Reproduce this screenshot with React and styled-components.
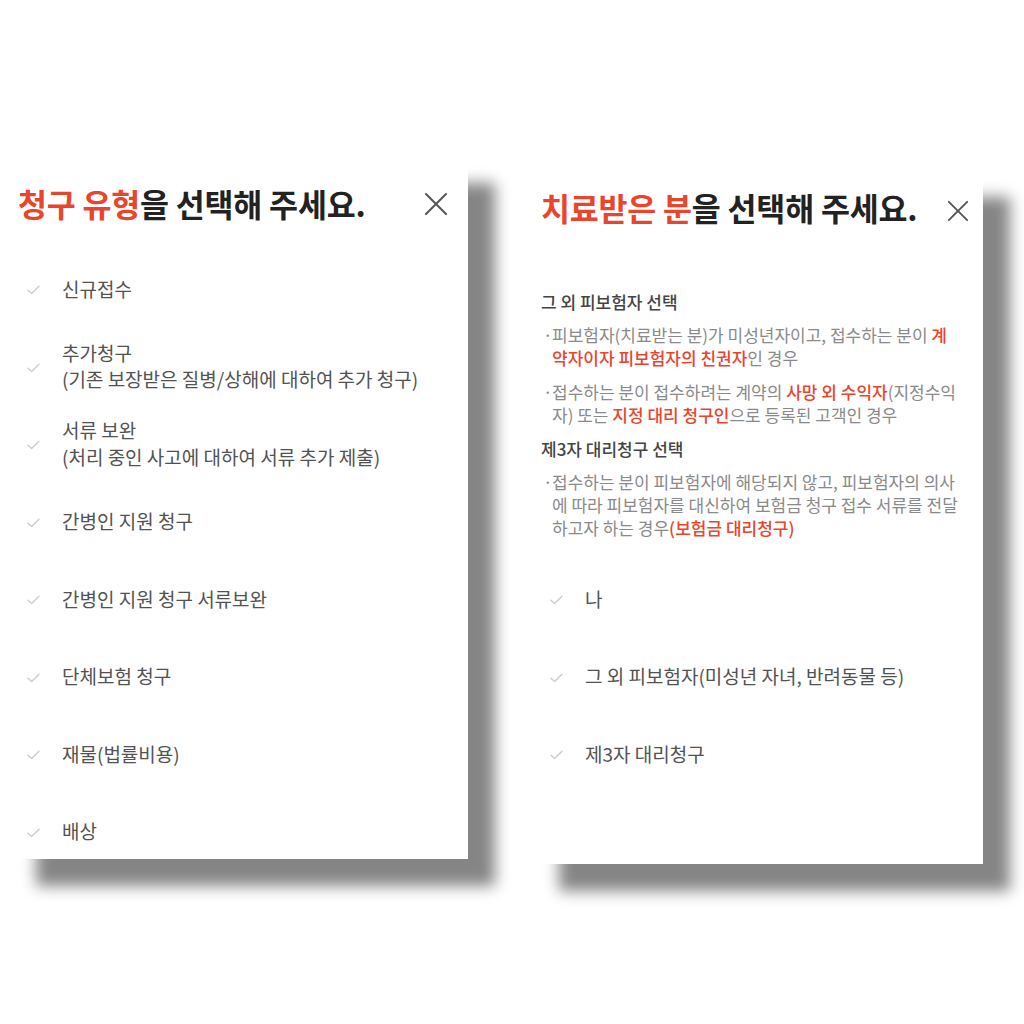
import React from 'react';
import styled, { createGlobalStyle } from 'styled-components';

const GlobalStyle = createGlobalStyle`
  html, body {
    margin: 0;
    padding: 0;
    background: #ffffff;
  }
  body {
    font-family: 'Noto Sans CJK KR', 'Noto Sans', sans-serif;
    -webkit-font-smoothing: antialiased;
  }
`;

const Page = styled.div`
  width: 1024px;
  height: 1024px;
  box-sizing: border-box;
  padding: 156px 0 0 9px;
  display: flex;
  align-items: flex-start;
  gap: 64px;
  overflow: hidden;
`;

const Card = styled.div`
  width: ${(p) => p.$width}px;
  height: ${(p) => p.$height}px;
  margin-top: ${(p) => p.$offset || 0}px;
  background: #ffffff;
  box-shadow: 27px 27px 14px rgba(0, 0, 0, 0.48);
  display: flex;
  flex-direction: column;
  overflow: hidden;
  flex-shrink: 0;
`;

const Header = styled.div`
  height: ${(p) => p.$height}px;
  display: flex;
  align-items: center;
  justify-content: space-between;
  padding: 0 ${(p) => p.$right}px 0 9px;
  flex-shrink: 0;
`;

const Title = styled.h2`
  margin: 0;
  font-size: 31.5px;
  line-height: 40px;
  font-weight: 700;
  color: #222222;
  letter-spacing: -0.2px;
  white-space: nowrap;
`;

const TitleRed = styled.span`
  color: #e8452f;
`;

const CloseButton = styled.button`
  border: 0;
  background: none;
  padding: 0;
  width: ${(p) => p.$size}px;
  height: ${(p) => p.$size}px;
  margin-top: ${(p) => p.$shift || 0}px;
  display: flex;
  align-items: center;
  justify-content: center;
  cursor: pointer;
  svg {
    width: 100%;
    height: 100%;
  }
`;

const Info = styled.div`
  padding: 46px 0 0 9px;
  flex-shrink: 0;
`;

const InfoHeading = styled.h3`
  margin: 0 0 9px;
  font-size: 17px;
  line-height: 24px;
  font-weight: 500;
  color: #444444;
  white-space: nowrap;
`;

const BulletRow = styled.div`
  display: flex;
  margin-bottom: 11px;
  font-size: 17px;
  line-height: 23px;
  color: #8a8a8a;
  white-space: nowrap;
`;

const BulletDot = styled.span`
  width: 11px;
  flex-shrink: 0;
  padding-left: 2px;
  box-sizing: border-box;
`;

const Red = styled.span`
  color: #e8452f;
  font-weight: 500;
`;

const OptionList = styled.ul`
  list-style: none;
  margin: ${(p) => p.$top || 0}px 0 0;
  padding: 0 0 0 18px;
`;

const Option = styled.li`
  height: 77.5px;
  display: flex;
  align-items: center;
  gap: 22px;
`;

const CheckMark = styled.span`
  width: 13px;
  height: 10px;
  flex-shrink: 0;
  display: flex;
  margin-top: 3px;
  svg {
    width: 13px;
    height: 10px;
  }
`;

const OptionText = styled.div`
  font-size: 19px;
  line-height: 26.5px;
  color: #525252;
  white-space: nowrap;
`;

function CloseIcon() {
  return (
    <svg viewBox="0 0 24 24" fill="none">
      <path d="M2 2 L22 22 M22 2 L2 22" stroke="#555555" strokeWidth="2" strokeLinecap="round" />
    </svg>
  );
}

function Check() {
  return (
    <CheckMark>
      <svg viewBox="0 0 13 10" fill="none">
        <path d="M1 5.2 L4.6 8.6 L12 1.2" stroke="#cdcdcd" strokeWidth="1.4" strokeLinecap="round" strokeLinejoin="round" />
      </svg>
    </CheckMark>
  );
}

const claimTypes = [
  ['신규접수'],
  ['추가청구', '(기존 보장받은 질병/상해에 대하여 추가 청구)'],
  ['서류 보완', '(처리 중인 사고에 대하여 서류 추가 제출)'],
  ['간병인 지원 청구'],
  ['간병인 지원 청구 서류보완'],
  ['단체보험 청구'],
  ['재물(법률비용)'],
  ['배상'],
];

const patients = [['나'], ['그 외 피보험자(미성년 자녀, 반려동물 등)'], ['제3자 대리청구']];

function Options({ items, top }) {
  return (
    <OptionList $top={top}>
      {items.map((lines) => (
        <Option key={lines[0]}>
          <Check />
          <OptionText>
            {lines.map((line, i) => (
              <React.Fragment key={line}>
                {i > 0 && <br />}
                {line}
              </React.Fragment>
            ))}
          </OptionText>
        </Option>
      ))}
    </OptionList>
  );
}

function Bullet({ children }) {
  return (
    <BulletRow>
      <BulletDot>·</BulletDot>
      <span>{children}</span>
    </BulletRow>
  );
}

export default function App() {
  return (
    <>
      <GlobalStyle />
      <Page>
        <Card $width={459} $height={703}>
          <Header $height={94} $right={20}>
            <Title>
              <TitleRed>청구 유형</TitleRed>을 선택해 주세요.
            </Title>
            <CloseButton $size={24} $shift={2} aria-label="닫기">
              <CloseIcon />
            </CloseButton>
          </Header>
          <Options items={claimTypes} />
        </Card>

        <Card $width={451} $height={694} $offset={14}>
          <Header $height={74} $right={14}>
            <Title>
              <TitleRed>치료받은 분</TitleRed>을 선택해 주세요.
            </Title>
            <CloseButton $size={22} $shift={7} aria-label="닫기">
              <CloseIcon />
            </CloseButton>
          </Header>
          <Info>
            <InfoHeading>그 외 피보험자 선택</InfoHeading>
            <Bullet>
              피보험자(치료받는 분)가 미성년자이고, 접수하는 분이 <Red>계</Red>
              <br />
              <Red>약자이자 피보험자의 친권자</Red>인 경우
            </Bullet>
            <Bullet>
              접수하는 분이 접수하려는 계약의 <Red>사망 외 수익자</Red>(지정수익
              <br />
              자) 또는 <Red>지정 대리 청구인</Red>으로 등록된 고객인 경우
            </Bullet>
            <InfoHeading>제3자 대리청구 선택</InfoHeading>
            <Bullet>
              접수하는 분이 피보험자에 해당되지 않고, 피보험자의 의사
              <br />
              에 따라 피보험자를 대신하여 보험금 청구 접수 서류를 전달
              <br />
              하고자 하는 경우<Red>(보험금 대리청구)</Red>
            </Bullet>
          </Info>
          <Options items={patients} top={10} />
        </Card>
      </Page>
    </>
  );
}
